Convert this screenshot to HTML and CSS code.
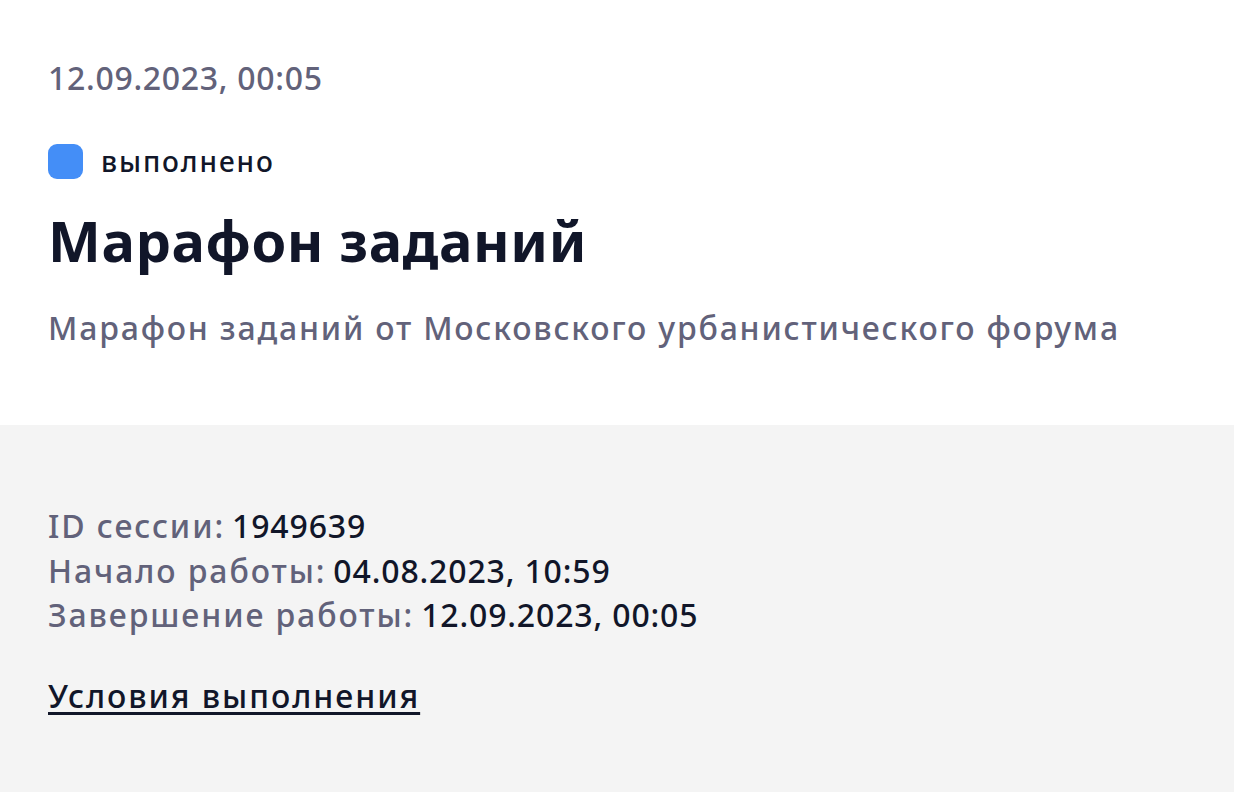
FILE: index.html
```html
<!DOCTYPE html>
<html lang="ru">
<head>
    <meta charset="UTF-8">
    <meta name="viewport" content="width=device-width, initial-scale=1.0">
    <title>Марафон заданий</title>
    <link rel="stylesheet" href="styles.css">
</head>
<body>
    <div class="task">
        <section class="task-head">
            <div class="task-date">12.09.2023, 00:05</div>
            <div class="status">
                <span class="status-dot"></span>
                <span class="status-text">выполнено</span>
            </div>
            <h1 class="task-title">Марафон заданий</h1>
            <p class="task-desc">Марафон заданий от Московского урбанистического форума</p>
        </section>
        <section class="task-info">
            <div class="info-list">
                <div class="info-row"><span class="info-label">ID сессии:</span><span class="info-value">1949639</span></div>
                <div class="info-row"><span class="info-label">Начало работы:</span><span class="info-value">04.08.2023, 10:59</span></div>
                <div class="info-row"><span class="info-label">Завершение работы:</span><span class="info-value">12.09.2023, 00:05</span></div>
            </div>
            <a class="task-link" href="#">Условия выполнения</a>
        </section>
    </div>
</body>
</html>
```

FILE: styles.css
```css
* {
    box-sizing: border-box;
}
body {
    margin: 0;
    background: #ffffff;
    font-family: "Noto Sans", "Open Sans", sans-serif;
    font-weight: 500;
    color: #111629;
}
.task {
    display: flex;
    flex-direction: column;
    min-height: 100vh;
}
.task-head {
    background: #ffffff;
    padding: 56px 48px 75px;
    display: flex;
    flex-direction: column;
    align-items: flex-start;
}
.task-date {
    font-size: 32px;
    line-height: 44px;
    letter-spacing: 0.7px;
    color: #62627a;
}
.status {
    display: flex;
    align-items: center;
    gap: 18px;
    margin-top: 44px;
    height: 35px;
}
.status-dot {
    width: 35px;
    height: 35px;
    border-radius: 9px;
    background: #448ef7;
}
.status-text {
    font-size: 28px;
    line-height: 35px;
    letter-spacing: 1.9px;
    color: #111629;
}
.task-title {
    margin: 28px 0 0;
    font-size: 56px;
    line-height: 67px;
    font-weight: 700;
    letter-spacing: 0.6px;
    color: #111629;
}
.task-desc {
    margin: 32px 0 0;
    font-size: 32px;
    line-height: 44px;
    letter-spacing: 1.8px;
    color: #62627a;
}
.task-info {
    flex: 1;
    background: #f4f4f4;
    padding: 79px 48px 40px;
    display: flex;
    flex-direction: column;
    align-items: flex-start;
}
.info-row {
    font-size: 32px;
    line-height: 44.5px;
}
.info-label {
    margin-right: 7px;
    letter-spacing: 1.9px;
    color: #62627a;
}
.info-value {
    letter-spacing: 0.85px;
    color: #111629;
}
.task-link {
    margin-top: 36px;
    font-size: 32px;
    line-height: 44px;
    letter-spacing: 1.95px;
    color: #111629;
    text-decoration: underline;
    text-underline-offset: 4px;
    text-decoration-thickness: 3px;
}
```
